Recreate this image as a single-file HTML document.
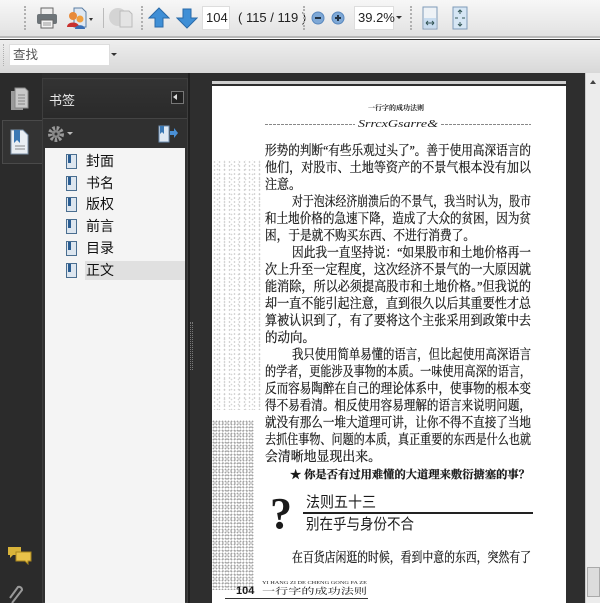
<!DOCTYPE html>
<html><head><meta charset="utf-8"><style>
*{margin:0;padding:0;box-sizing:border-box}
body{width:600px;height:603px;overflow:hidden;background:#2e2e2e;position:relative;font-family:"Liberation Sans","Noto Sans CJK SC",sans-serif}
.a{position:absolute}
.tb1{left:0;top:0;width:600px;height:36px;background:linear-gradient(#f7f7f7,#e2e2e2)}
.sep1{left:0;top:36px;width:600px;height:3px;background:#b8b8b8;border-bottom:1px solid #fff}
.tb2{left:0;top:40px;width:600px;height:33px;background:linear-gradient(#eeeeee,#d8d8d8)}
.dots{width:2px;height:24px;border-left:2px dotted #b0b0b0}
.box{background:#fff;border:1px solid #ddd;font-size:13px;color:#222}
.cjk{font-family:"Liberation Sans","Noto Sans CJK SC",sans-serif}
.side{left:0;top:73px;width:42px;height:530px;background:#2b2b2b}
.panel{left:42px;top:78px;width:146px;height:525px;background:#303030;border:1px solid #3e3e3e}
.list{left:45px;top:148px;width:140px;height:455px;background:#f4f4f4}
.item{position:absolute;left:0;width:140px;height:21px;font-size:14px;color:#111}
.item i{position:absolute;left:21px;top:3px;width:11px;height:15px;background:#dde6ef;border:1px solid #4a6e90}
.item i:before{content:"";position:absolute;left:1px;top:0;width:3px;height:8px;background:#2a5d92}
.item span{position:absolute;left:41px;top:0;line-height:21px}
.page{left:212px;top:86px;width:354px;height:517px;background:#fff}
.noise{left:212px;top:160px;width:50px;height:250px;opacity:.4;background:
radial-gradient(circle,#777 0.6px,transparent 1px) 0 0/5px 4px,
radial-gradient(circle,#999 0.6px,transparent 1px) 2px 2px/7px 5px}
.noise2{left:212px;top:420px;width:42px;height:170px;opacity:.6;background:
radial-gradient(circle,#666 0.7px,transparent 1.1px) 0 0/3px 3px,
radial-gradient(circle,#888 0.7px,transparent 1.1px) 1px 1px/4px 4px}
.scroll{left:585px;top:73px;width:15px;height:530px;background:#ececec;border-left:1px solid #ccc}
svg text{font-family:"Liberation Serif","Noto Serif CJK SC",serif;fill:#1a1a1a}
.bt text{stroke:#1a1a1a;stroke-width:0.25px}
</style></head><body>
<div class="a tb1"></div>
<div class="a sep1"></div>
<div class="a tb2"></div>
<div class="a dots" style="left:24px;top:6px"></div>
<svg class="a" style="left:35px;top:6px" width="24" height="24" viewBox="0 0 24 24"><rect x="6" y="2" width="12" height="7" fill="#eee" stroke="#666"/><rect x="2" y="8" width="20" height="10" rx="2" fill="#6d7478"/><rect x="6" y="14" width="12" height="8" fill="#f4f4f4" stroke="#666"/><line x1="8" y1="17" x2="16" y2="17" stroke="#999"/><line x1="8" y1="19" x2="16" y2="19" stroke="#999"/></svg>
<svg class="a" style="left:65px;top:5px" width="30" height="26" viewBox="0 0 30 26"><path d="M9 3h8l4 4v15H9z" fill="#dfe8f2" stroke="#5a7da3"/><circle cx="8" cy="11" r="4" fill="#e88a3a"/><path d="M2 22c0-6 12-6 12 0z" fill="#c8312f"/><circle cx="15" cy="14" r="3.5" fill="#f0a040"/><path d="M10 24c0-5 10-5 10 0z" fill="#3a6fb5"/><path d="M24 13l4 0-2 3z" fill="#333"/></svg>
<div class="a" style="left:103px;top:8px;width:1px;height:20px;background:#bbb"></div>
<svg class="a" style="left:108px;top:5px" width="26" height="26" viewBox="0 0 26 26"><circle cx="10" cy="12" r="9" fill="#d4d4d4"/><path d="M12 6h9l3 3v13H12z" fill="#e4e4e4" stroke="#bbb"/></svg>
<div class="a dots" style="left:141px;top:6px"></div>
<svg class="a" style="left:148px;top:6px" width="22" height="24" viewBox="0 0 22 24"><path d="M11 2L21 12H15V21H7V12H1Z" fill="#3f8fd6" stroke="#2a6aa8"/></svg>
<svg class="a" style="left:176px;top:6px" width="22" height="24" viewBox="0 0 22 24"><path d="M11 22L21 12H15V3H7V12H1Z" fill="#3f8fd6" stroke="#2a6aa8"/></svg>
<div class="a box" style="left:202px;top:6px;width:28px;height:24px;line-height:22px;padding-left:3px">104</div>
<div class="a" style="left:238px;top:6px;font-size:13px;line-height:24px;color:#222">( 115 / 119 )</div>
<div class="a dots" style="left:303px;top:6px"></div>
<svg class="a" style="left:311px;top:11px" width="14" height="14"><circle cx="7" cy="7" r="6" fill="#7ea8d6" stroke="#5a88bd"/><rect x="4" y="6" width="6" height="2" fill="#234"/></svg>
<svg class="a" style="left:331px;top:11px" width="14" height="14"><circle cx="7" cy="7" r="6" fill="#7ea8d6" stroke="#5a88bd"/><rect x="4" y="6" width="6" height="2" fill="#234"/><rect x="6" y="4" width="2" height="6" fill="#234"/></svg>
<div class="a box" style="left:354px;top:6px;width:40px;height:24px;line-height:22px;padding-left:3px">39.2%</div>
<div class="a" style="left:396px;top:16px;border:3px solid transparent;border-top:3px solid #333"></div>
<div class="a dots" style="left:410px;top:6px"></div>
<svg class="a" style="left:422px;top:6px" width="16" height="24" viewBox="0 0 16 24"><rect x="1" y="1" width="14" height="22" fill="#eef2f6" stroke="#7f9bb8"/><rect x="2" y="12" width="12" height="10" fill="#c8dcef"/><path d="M4 17h8M4 17l2-2M4 17l2 2M12 17l-2-2M12 17l-2 2" stroke="#355" fill="none"/></svg>
<svg class="a" style="left:452px;top:6px" width="16" height="24" viewBox="0 0 16 24"><rect x="1" y="1" width="14" height="22" fill="#d6e6f4" stroke="#7f9bb8"/><path d="M8 4v4M6 6l2-2 2 2M8 20v-4M6 18l2 2 2-2M3 12h3M13 12h-3" stroke="#355" fill="none"/></svg>
<div class="a dots" style="left:3px;top:44px;height:22px;border-left-width:1px"></div>
<div class="a box cjk" style="left:9px;top:44px;width:101px;height:22px;line-height:20px;padding-left:3px;color:#555;font-size:12.5px">查找</div>
<div class="a" style="left:111px;top:53px;border:3px solid transparent;border-top:3px solid #333"></div>
<div class="a side"></div>
<svg class="a" style="left:8px;top:86px" width="22" height="26" viewBox="0 0 22 26"><path d="M3 5h12v19H3z" fill="#9a9a9a"/><path d="M7 2h10l3 3v17H7z" fill="#c9c9c9" stroke="#888"/><path d="M10 9h7M10 12h7M10 15h7M10 18h7" stroke="#888"/></svg>
<div class="a" style="left:2px;top:120px;width:42px;height:44px;background:#333;border:1px solid #4a4a4a;border-right:none"></div>
<svg class="a" style="left:10px;top:129px" width="20" height="26" viewBox="0 0 20 26"><path d="M1 1h12l5 5v19H1z" fill="#e9eef3" stroke="#7a8fa6"/><path d="M4 1v13l3-3 3 3V1z" fill="#3b78b4"/><path d="M5 17h10M5 20h10" stroke="#888"/></svg>
<svg class="a" style="left:7px;top:545px" width="26" height="20" viewBox="0 0 26 20"><path d="M1 2h13v8H6l-3 3v-3H1z" fill="#d9b43a"/><path d="M9 7h15v9h-3v3l-3-3H9z" fill="#e8c24a" stroke="#a8861d"/></svg>
<svg class="a" style="left:8px;top:584px" width="20" height="19" viewBox="0 0 20 19"><path d="M4 19L14 6a3 3 0 0 0-4-3L2 14" fill="none" stroke="#999" stroke-width="2"/></svg>
<div class="a panel"></div>
<div class="a" style="left:43px;top:79px;width:144px;height:40px;background:linear-gradient(#333,#2a2a2a);border-bottom:1px solid #444"></div>
<div class="a cjk" style="left:49px;top:90px;font-size:13px;color:#e8e8e8">书签</div>
<div class="a" style="left:171px;top:91px;width:13px;height:13px;border:1px solid #777;background:#222"></div>
<div class="a" style="left:173px;top:94px;border:3px solid transparent;border-right:4px solid #ddd;border-left:none"></div>
<svg class="a" style="left:47px;top:125px" width="28" height="18" viewBox="0 0 28 18"><circle cx="9" cy="9" r="6" fill="none" stroke="#999" stroke-width="4" stroke-dasharray="2.5 1.6"/><circle cx="9" cy="9" r="4" fill="#888"/><circle cx="9" cy="9" r="1.5" fill="#333"/><path d="M20 7h6l-3 3z" fill="#bbb"/></svg>
<svg class="a" style="left:158px;top:125px" width="20" height="18" viewBox="0 0 20 18"><path d="M1 1h10v16H1z" fill="#dfe8f2" stroke="#6d8eb2"/><path d="M2 1v8l2-2 2 2V1z" fill="#3b78b4"/><path d="M12 6h4V3l4 5-4 5v-3h-4z" fill="#4a90d6"/></svg>
<div class="a list"></div>
<div class="a" style="left:85px;top:261px;width:100px;height:19px;background:#e0e0e0"></div>
<div class="a cjk" style="left:45px;top:148px;width:140px;height:150px">
<div class="item" style="top:3px"><i></i><span>封面</span></div>
<div class="item" style="top:25px"><i></i><span>书名</span></div>
<div class="item" style="top:46px"><i></i><span>版权</span></div>
<div class="item" style="top:68px"><i></i><span>前言</span></div>
<div class="item" style="top:90px"><i></i><span>目录</span></div>
<div class="item" style="top:112px"><i></i><span>正文</span></div>
</div>
<div class="a" style="left:188px;top:73px;width:2px;height:530px;background:#1f1f1f"></div>
<div class="a" style="left:190px;top:322px;width:3px;height:48px;border-left:1px dotted #777;border-right:1px dotted #777"></div>
<div class="a" style="left:212px;top:81px;width:354px;height:3px;background:#cfcfcf"></div>
<div class="a page"></div>
<div class="a noise"></div>
<div class="a noise2"></div>
<svg class="a" style="left:0;top:0" width="600" height="603" viewBox="0 0 600 603">
<text x="368" y="110" font-size="7" font-weight="bold" textLength="56" lengthAdjust="spacingAndGlyphs">一行字的成功法则</text>
<line x1="265" y1="124.5" x2="531" y2="124.5" stroke="#888" stroke-dasharray="3 1"/>
<rect x="355" y="117" width="85" height="13" fill="#fff"/>
<text x="358" y="127" font-size="11" font-style="italic" textLength="80" lengthAdjust="spacingAndGlyphs">SrrcxGsarre&amp;</text>
<g class="bt" font-size="13.5">
<text x="265" y="155" textLength="266" lengthAdjust="spacingAndGlyphs">形势的判断“有些乐观过头了”。善于使用高深语言的</text>
<text x="265" y="172" textLength="266" lengthAdjust="spacingAndGlyphs">他们，对股市、土地等资产的不景气根本没有加以</text>
<text x="265" y="189" textLength="36" lengthAdjust="spacingAndGlyphs">注意。</text>
<text x="292" y="206" textLength="239" lengthAdjust="spacingAndGlyphs">对于泡沫经济崩溃后的不景气，我当时认为，股市</text>
<text x="265" y="223" textLength="266" lengthAdjust="spacingAndGlyphs">和土地价格的急速下降，造成了大众的贫困，因为贫</text>
<text x="265" y="240" textLength="210" lengthAdjust="spacingAndGlyphs">困，于是就不购买东西、不进行消费了。</text>
<text x="292" y="257" textLength="239" lengthAdjust="spacingAndGlyphs">因此我一直坚持说：“如果股市和土地价格再一</text>
<text x="265" y="274" textLength="266" lengthAdjust="spacingAndGlyphs">次上升至一定程度，这次经济不景气的一大原因就</text>
<text x="265" y="291" textLength="266" lengthAdjust="spacingAndGlyphs">能消除，所以必须提高股市和土地价格。”但我说的</text>
<text x="265" y="308" textLength="266" lengthAdjust="spacingAndGlyphs">却一直不能引起注意，直到很久以后其重要性才总</text>
<text x="265" y="325" textLength="266" lengthAdjust="spacingAndGlyphs">算被认识到了，有了要将这个主张采用到政策中去</text>
<text x="265" y="342" textLength="50" lengthAdjust="spacingAndGlyphs">的动向。</text>
<text x="292" y="359" textLength="239" lengthAdjust="spacingAndGlyphs">我只使用简单易懂的语言，但比起使用高深语言</text>
<text x="265" y="376" textLength="266" lengthAdjust="spacingAndGlyphs">的学者，更能涉及事物的本质。一味使用高深的语言，</text>
<text x="265" y="393" textLength="266" lengthAdjust="spacingAndGlyphs">反而容易陶醉在自己的理论体系中，使事物的根本变</text>
<text x="265" y="410" textLength="266" lengthAdjust="spacingAndGlyphs">得不易看清。相反使用容易理解的语言来说明问题，</text>
<text x="265" y="427" textLength="266" lengthAdjust="spacingAndGlyphs">就没有那么一堆大道理可讲，让你不得不直接了当地</text>
<text x="265" y="444" textLength="266" lengthAdjust="spacingAndGlyphs">去抓住事物、问题的本质，真正重要的东西是什么也就</text>
<text x="265" y="461" textLength="116" lengthAdjust="spacingAndGlyphs">会清晰地显现出来。</text>
<text x="290" y="478" font-size="11" font-weight="bold" textLength="240" lengthAdjust="spacingAndGlyphs">★ 你是否有过用难懂的大道理来敷衍搪塞的事？</text>
<text x="292" y="562" textLength="239" lengthAdjust="spacingAndGlyphs">在百货店闲逛的时候，看到中意的东西，突然有了</text>
</g>
<text x="270" y="528" font-size="44" font-weight="bold" fill="#111">?</text>
<text x="306" y="507" font-size="15" style="font-family:'Liberation Sans','Noto Sans CJK SC',sans-serif" textLength="70" lengthAdjust="spacingAndGlyphs">法则五十三</text>
<rect x="303" y="512" width="230" height="2" fill="#222"/>
<text x="306" y="529" font-size="15" style="font-family:'Liberation Sans','Noto Sans CJK SC',sans-serif" textLength="108" lengthAdjust="spacingAndGlyphs">别在乎与身份不合</text>
<text x="236" y="594" font-size="11" font-weight="bold" style="font-family:'Liberation Sans',sans-serif">104</text>
<text x="262" y="584" font-size="4" textLength="105" lengthAdjust="spacingAndGlyphs">YI HANG ZI DE CHENG GONG FA ZE</text>
<text x="262" y="594" font-size="8.5" textLength="105" lengthAdjust="spacingAndGlyphs">一行字的成功法则</text>
<line x1="225" y1="598.5" x2="368" y2="598.5" stroke="#333"/>
</svg>
<div class="a scroll"></div>
<div class="a" style="left:590px;top:80px;border:3px solid transparent;border-bottom:4px solid #444;border-top:none"></div>
<div class="a" style="left:587px;top:567px;width:13px;height:30px;background:#dcdcdc;border:1px solid #aaa"></div>
</body></html>
